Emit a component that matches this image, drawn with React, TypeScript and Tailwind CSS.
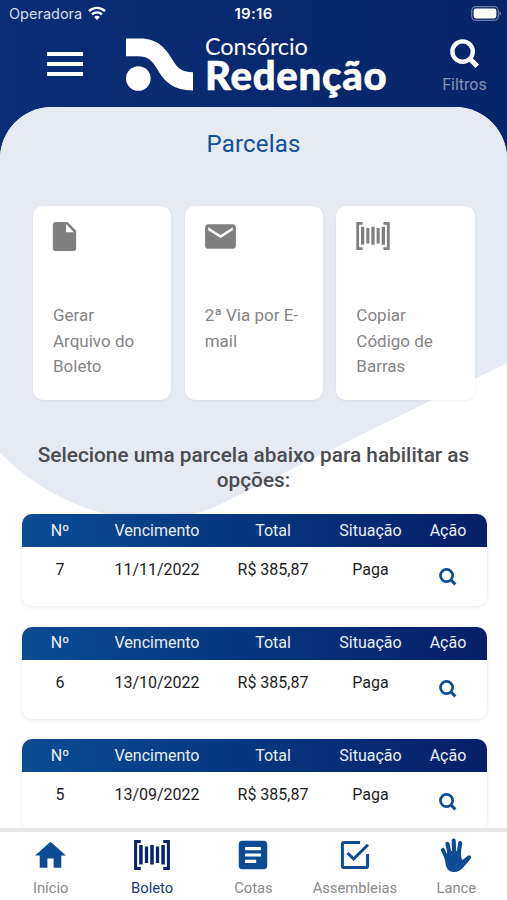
import * as React from "react";
import { MdArticle, MdEmail, MdHome, MdInsertDriveFile } from "react-icons/md";

type Installment = {
  number: number;
  dueDate: string;
  total: string;
  status: string;
};

const installments: Installment[] = [
  { number: 7, dueDate: "11/11/2022", total: "R$ 385,87", status: "Paga" },
  { number: 6, dueDate: "13/10/2022", total: "R$ 385,87", status: "Paga" },
  { number: 5, dueDate: "13/09/2022", total: "R$ 385,87", status: "Paga" },
];

const actions = [
  { label: "Gerar Arquivo do Boleto", icon: <MdInsertDriveFile className="-ml-[6px] size-[35px]" /> },
  { label: "2ª Via por E-mail", icon: <MdEmail className="-ml-[3px] size-[37px]" /> },
  { label: "Copiar Código de Barras", icon: <BarcodeIcon className="h-[28px] w-[34px]" /> },
];

const tabs = [
  { label: "Início", icon: <MdHome className="size-[37px]" /> },
  { label: "Boleto", icon: <BarcodeIcon className="h-[30px] w-[36px]" />, active: true },
  { label: "Cotas", icon: <MdArticle className="size-[38px]" /> },
  { label: "Assembleias", icon: <CheckBoxIcon /> },
  { label: "Lance", icon: <HandIcon /> },
];

export default function App() {
  return (
    <div className="flex h-[900px] w-[507px] flex-col overflow-hidden bg-linear-to-r from-[#092e75] to-[#062469] font-[Roboto,sans-serif]">
      <StatusBar />
      <Header />
      <main className="grid min-h-0 flex-1 overflow-hidden rounded-t-[52px] bg-white">
        <PageBackdrop />
        <div className="col-start-1 row-start-1 flex min-h-0 flex-col">
          <h1 className="mt-[21px] text-center text-[24px] leading-8 tracking-[0.2px] text-[#12509a]">
            Parcelas
          </h1>
          <div className="mt-[46px] grid grid-cols-3 gap-[13.5px] pr-[32.5px] pl-[33px]">
            {actions.map((action) => (
              <button
                key={action.label}
                className="flex h-[194px] flex-col rounded-[10px] bg-white px-[20px] pt-[12px] text-left text-[#7f7f7f] shadow-[0_1px_3px_rgba(0,0,0,0.07)]"
              >
                <span className="flex h-[36px] items-center">{action.icon}</span>
                <span className="mt-[49px] text-[17px] leading-[25.7px] text-[#858585]">
                  {action.label}
                </span>
              </button>
            ))}
          </div>
          <h2 className="mt-[43px] px-[30px] text-center text-[20.8px] leading-[25px] font-medium text-[#4b4c50]">
            Selecione uma parcela abaixo para habilitar as opções:
          </h2>
          <div className="mt-[21px] flex flex-col gap-[20.5px] pr-[20.5px] pl-[21.5px]">
            {installments.map((installment) => (
              <InstallmentCard key={installment.number} installment={installment} />
            ))}
          </div>
        </div>
      </main>
      <TabBar />
    </div>
  );
}

function StatusBar() {
  return (
    <div className="grid h-[28px] shrink-0 grid-cols-3 items-center pr-[6px] pl-[9px] text-white">
      <div className="flex items-center gap-[6px]">
        <span className="font-[Inter,sans-serif] text-[14.5px] text-[#d5dcea]">Operadora</span>
        <svg viewBox="0 0 18 14" className="mb-[2px] h-[14px] w-[18px]" fill="none" stroke="currentColor">
          <path d="M1 5.2a11.4 11.4 0 0 1 16 0" strokeWidth="2.4" />
          <path d="M4 8.3a7.2 7.2 0 0 1 10 0" strokeWidth="2.3" />
          <path d="M9 14 6.2 11.1a4 4 0 0 1 5.6 0Z" fill="currentColor" stroke="none" />
        </svg>
      </div>
      <span className="mr-[3px] text-center font-[Inter,sans-serif] text-[15px] font-semibold tracking-[0.3px]">
        19:16
      </span>
      <svg viewBox="0 0 30 15" className="mb-[1px] h-[15px] w-[30px] justify-self-end">
        <rect x="0.7" y="0.7" width="26.6" height="13.6" rx="4" fill="none" stroke="#6c7fa9" strokeWidth="1.2" />
        <rect x="2.6" y="2.6" width="22.8" height="9.8" rx="2.4" fill="#fff" />
        <path d="M28.5 5v5q1.5-1 1.5-2.5T28.5 5Z" fill="#6c7fa9" />
      </svg>
    </div>
  );
}

function Header() {
  return (
    <header className="flex h-[79px] shrink-0 items-start pl-[47px] text-white">
      <button className="mt-[23.5px] flex w-[36px] flex-col gap-[6px]" aria-label="Menu">
        <span className="h-[4px] bg-white" />
        <span className="h-[4px] bg-white" />
        <span className="h-[4px] bg-white" />
      </button>
      <svg viewBox="378 112 201 158" className="mt-[9.5px] ml-[43px] h-[53px] w-[67px]" fill="currentColor">
        <path d="M378 113H420C474 113 498 144 517 176C535 206 548 214 579 214V269C522 269 494 244 473 207C457 179 444 166 412 166H378Z" />
        <circle cx="415" cy="233" r="37" />
      </svg>
      <div className="ml-[12px] flex w-[184px] flex-col font-[Lato,sans-serif] whitespace-nowrap">
        <span className="mt-[6px] text-[23.5px] leading-[24px] tracking-[-0.1px]">Consórcio</span>
        <span className="mt-[-1px] text-[40px] leading-[36px] font-black tracking-[0.8px] [-webkit-text-stroke:0.6px_white]">
          Redenção
        </span>
      </div>
      <button className="mt-[11px] ml-[45.5px] flex w-[60px] flex-col items-center">
        <SearchIcon className="size-[30px]" />
        <span className="mt-[6px] text-[16px] leading-[20px] text-[#8592b1]">Filtros</span>
      </button>
    </header>
  );
}

// pale curved shape behind the action cards
function PageBackdrop() {
  return (
    <svg viewBox="0 0 507 721" className="col-start-1 row-start-1 h-[721px] w-[507px]">
      <path d="M0 0H507V256L213 401Q150 424 83 400Q36 382 0 346Z" fill="#e6eaf2" />
    </svg>
  );
}

function InstallmentCard({ installment }: { installment: Installment }) {
  return (
    <section className="h-[92px] shrink-0 overflow-hidden rounded-[10px] bg-white text-center text-[16px] shadow-[0_1px_4px_rgba(0,0,0,0.1)]">
      <div className="grid h-[33px] grid-cols-[77px_117px_115px_80px_75px] items-center bg-linear-to-r from-[#0b4c93] to-[#061f68] text-[#e9eef6]">
        <span>Nº</span>
        <span>Vencimento</span>
        <span>Total</span>
        <span>Situação</span>
        <span>Ação</span>
      </div>
      <div className="grid grid-cols-[77px_117px_115px_80px_75px] pt-[11px] text-[#1d1d1d]">
        <span>{installment.number}</span>
        <span>{installment.dueDate}</span>
        <span>{installment.total}</span>
        <span>{installment.status}</span>
        <button className="mt-[9.5px] flex justify-center text-[#0d4b94]" aria-label="Detalhes">
          <SearchIcon className="size-[18px]" />
        </button>
      </div>
    </section>
  );
}

function TabBar() {
  return (
    <nav className="grid h-[72px] shrink-0 grid-cols-5 border-t-4 border-[#e8e8e8] bg-white">
      {tabs.map((tab) => (
        <button key={tab.label} className="flex flex-col items-center text-[#0d4b94]">
          <span className={tab.active ? "flex h-[46px] items-center text-[#08236e]" : "flex h-[46px] items-center"}>
            {tab.icon}
          </span>
          <span
            className={
              tab.active
                ? "text-[14.75px] leading-[21px] text-[#183b82]"
                : "text-[14.75px] leading-[21px] text-[#8a8a8a]"
            }
          >
            {tab.label}
          </span>
        </button>
      ))}
    </nav>
  );
}

function SearchIcon({ className }: { className: string }) {
  return (
    <svg viewBox="0 0 30 30" className={className} fill="none" stroke="currentColor">
      <circle cx="12.6" cy="12.6" r="10.2" strokeWidth="4.4" />
      <path d="M19.5 19.5 27.3 27.3" strokeWidth="5" />
    </svg>
  );
}

function BarcodeIcon({ className }: { className: string }) {
  return (
    <svg viewBox="0 0 36 30" className={className} fill="none" stroke="currentColor">
      <path d="M6.8 1.4H1.6V28.6H6.8M29.2 1.4H34.4V28.6H29.2" strokeWidth="3" />
      <path d="M6.9 5V24.5M18 5V24.5M29.1 5V24.5" strokeWidth="3.5" />
      <path d="M12.5 6.5V23M23.5 6.5V23" strokeWidth="3.3" />
    </svg>
  );
}

function CheckBoxIcon() {
  return (
    <svg viewBox="0 0 30 30" className="size-[30px]" fill="none" stroke="currentColor" strokeWidth="3">
      <path d="M20 2.4H4Q2.4 2.4 2.4 4V26Q2.4 27.6 4 27.6H26Q27.6 27.6 27.6 26V14" />
      <path d="M7.5 13 13.6 19 28 4.8" />
    </svg>
  );
}

function HandIcon() {
  return (
    <svg viewBox="0 0 32 34" className="size-[34px]" fill="none" stroke="currentColor" strokeLinecap="round">
      <path d="M6.2 19 2.9 12M10 17 7.4 5.8M14.3 17 13.7 2.5M18.5 17 20.2 5" strokeWidth="4.1" />
      <path d="M20 27 29 19.5" strokeWidth="4.2" />
      <path d="M4.2 18 9 13H20.4L21.6 20.5Q22 22.5 24 21L28 17.8 30.4 21 24.5 28Q20 34 14 34Q8 34 6 28Z" fill="currentColor" stroke="none" />
    </svg>
  );
}
